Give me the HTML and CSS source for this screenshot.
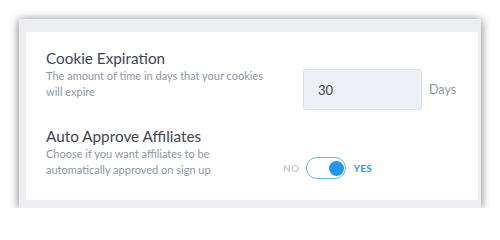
FILE: index.html
```html
<!DOCTYPE html>
<html>
<head>
<meta charset="utf-8">
<link rel="stylesheet" href="styles.css">
</head>
<body>
<div class="frame">
  <div class="card">
    <div class="row row-cookie">
      <div class="info">
        <div class="title">Cookie Expiration</div>
        <div class="desc">The amount of time in days that your cookies will expire</div>
      </div>
      <div class="control">
        <div class="input">30</div>
        <span class="unit">Days</span>
      </div>
    </div>
    <div class="row row-approve">
      <div class="info">
        <div class="title">Auto Approve Affiliates</div>
        <div class="desc">Choose if you want affiliates to be automatically approved on sign up</div>
      </div>
      <div class="control toggle-wrap">
        <span class="no">NO</span>
        <span class="toggle"><span class="knob"></span></span>
        <span class="yes">YES</span>
      </div>
    </div>
  </div>
</div>
</body>
</html>
```
FILE: styles.css
```css
html, body {
  margin: 0;
  padding: 0;
  background: #ffffff;
  font-family: "Lato", "Open Sans", sans-serif;
}
.frame {
  margin: 19px 0 0 19px;
  width: 462px;
  box-sizing: border-box;
  background: #eceef1;
  padding: 13px 3px 8px 7px;
  box-shadow: 0 1px 9px rgba(0, 0, 0, 0.55);
}
.card {
  background: #ffffff;
  padding: 16px 0 23px 20px;
}
.row {
  display: flex;
}
.info {
  width: 257px;
}
.title {
  font-size: 15.3px;
  line-height: 20px;
  color: #3e4451;
}
.desc {
  font-size: 11px;
  line-height: 16px;
  color: #8e97a8;
  width: 225px;
}
.row-cookie .control {
  display: flex;
  align-items: center;
  margin-top: 21px;
}
.input {
  width: 119px;
  height: 41px;
  box-sizing: border-box;
  background: #edf1f5;
  border: 1px solid #dbe1e8;
  border-radius: 3px;
  padding-left: 14px;
  display: flex;
  align-items: center;
  font-size: 13px;
  color: #3e4451;
}
.unit {
  margin-left: 7px;
  font-size: 12.5px;
  color: #8e97a8;
}
.row-approve {
  margin-top: 17px;
  align-items: flex-end;
}
.row-approve .title {
  line-height: 19px;
}
.row-approve .desc {
  line-height: 15.5px;
}
.toggle-wrap {
  display: flex;
  align-items: center;
  margin-left: -20px;
  margin-bottom: -2px;
}
.no, .yes {
  font-size: 10px;
  font-weight: 700;
  letter-spacing: 0.3px;
}
.no {
  color: #c9cdd4;
}
.yes {
  color: #2196f3;
}
.toggle {
  width: 40px;
  height: 22px;
  box-sizing: border-box;
  border: 1.5px solid #6cb4f3;
  border-radius: 11px;
  margin: 0 7px;
  display: flex;
  align-items: center;
  justify-content: flex-end;
  padding-right: 1.5px;
}
.knob {
  width: 15px;
  height: 15px;
  border-radius: 50%;
  background: #2196f3;
}
```
